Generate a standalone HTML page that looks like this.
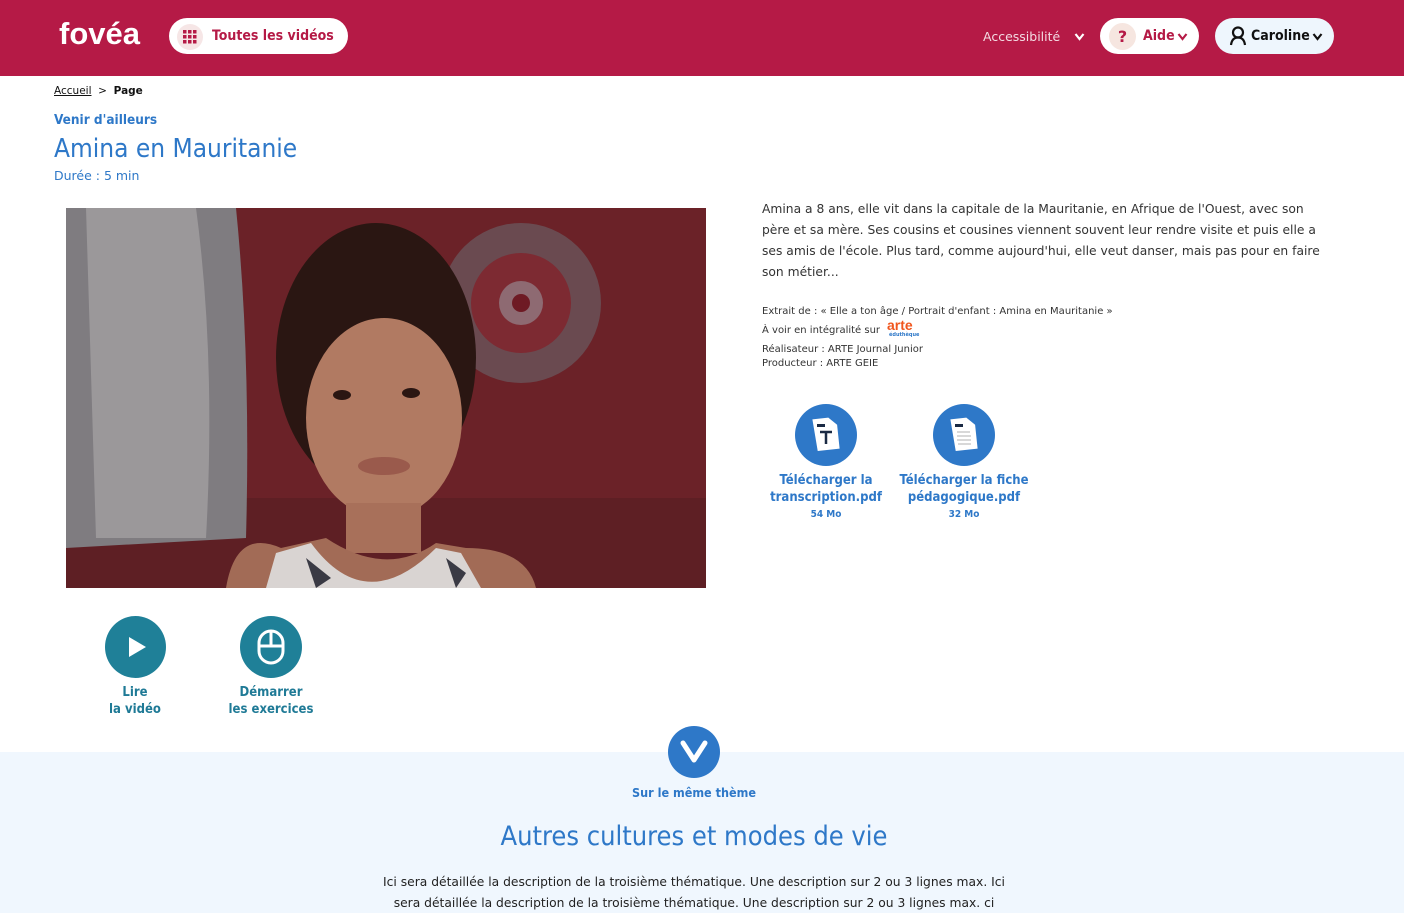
<!DOCTYPE html>
<html><head><meta charset="utf-8">
<style>
*{margin:0;padding:0;box-sizing:border-box}
body{width:1404px;height:913px;overflow:hidden;background:#fff;font-family:"DejaVu Sans","Liberation Sans",sans-serif;position:relative;color:#222}
.abs{position:absolute}
.hdr{position:absolute;left:0;top:0;width:1404px;height:76px;background:#b51a46}
.pill{position:absolute;background:#fff;border-radius:18px;height:36px;top:18px}
.blue{color:#2e78c8}
.h{font-family:"DejaVu Sans Condensed","Liberation Sans",sans-serif}
.sm{font-size:10px;color:#333;line-height:14px}
.circ{position:absolute;border-radius:50%}
.lbl{position:absolute;text-align:center;font-family:"DejaVu Sans Condensed","Liberation Sans",sans-serif;font-weight:bold;font-size:13px;line-height:17px}
</style></head><body>
<div class="hdr"></div>
<div class="abs" style="left:59px;top:16px;color:#fff;font-size:31px;font-weight:bold;font-family:'Liberation Sans',sans-serif">fovéa</div>
<div class="pill" style="left:169px;width:179px"></div>
<div class="circ" style="left:177px;top:24px;width:26px;height:26px;background:#f6e6e6"></div>
<svg class="abs" style="left:183px;top:30px" width="14" height="14"><g fill="#b51a46"><rect x="0" y="0" width="3.5" height="3.5"/><rect x="5" y="0" width="3.5" height="3.5"/><rect x="10" y="0" width="3.5" height="3.5"/><rect x="0" y="5" width="3.5" height="3.5"/><rect x="5" y="5" width="3.5" height="3.5"/><rect x="10" y="5" width="3.5" height="3.5"/><rect x="0" y="10" width="3.5" height="3.5"/><rect x="5" y="10" width="3.5" height="3.5"/><rect x="10" y="10" width="3.5" height="3.5"/></g></svg>
<div class="abs h" style="left:212px;top:28px;color:#b51a46;font-size:14px;font-weight:bold">Toutes les vidéos</div>
<div class="abs" style="left:983px;top:29px;color:#f3dbe2;font-size:12.5px">Accessibilité</div>
<svg class="abs" style="left:1074px;top:32px" width="11" height="10"><path d="M1.5 2 L5.5 7 L9.5 2" stroke="#fff" stroke-width="2.2" fill="none"/></svg>
<div class="pill" style="left:1100px;width:99px"></div>
<div class="circ" style="left:1109px;top:23px;width:27px;height:27px;background:#f6e6e0;color:#b51a46;font-weight:bold;font-size:16px;text-align:center;line-height:27px">?</div>
<div class="abs h" style="left:1143px;top:28px;color:#b51a46;font-weight:bold;font-size:14px">Aide</div>
<svg class="abs" style="left:1177px;top:32px" width="11" height="10"><path d="M1.5 2 L5.5 7 L9.5 2" stroke="#b51a46" stroke-width="2.2" fill="none"/></svg>
<div class="pill" style="left:1215px;width:119px;background:#eef6fd"></div>
<svg class="abs" style="left:1229px;top:26px" width="18" height="20"><circle cx="9" cy="6.5" r="5" stroke="#111" stroke-width="2.2" fill="none"/><path d="M2 19 Q3 11.5 9 11.5 Q15 11.5 16 19" stroke="#111" stroke-width="2.2" fill="none"/></svg>
<div class="abs h" style="left:1251px;top:28px;color:#111;font-weight:bold;font-size:14px">Caroline</div>
<svg class="abs" style="left:1312px;top:32px" width="11" height="10"><path d="M1.5 2 L5.5 7 L9.5 2" stroke="#111" stroke-width="2.2" fill="none"/></svg>

<div class="abs" style="left:54px;top:85px;font-size:10.5px;color:#111"><u>Accueil</u> &nbsp;&gt;&nbsp; <b>Page</b></div>
<div class="abs h blue" style="left:54px;top:112px;font-size:13.5px;font-weight:bold">Venir d'ailleurs</div>
<div class="abs h blue" style="left:54px;top:134px;font-size:26px">Amina en Mauritanie</div>
<div class="abs blue" style="left:54px;top:168px;font-size:12.5px">Durée : 5 min</div>

<svg class="abs" style="left:66px;top:208px" width="640" height="380">
<rect width="640" height="380" fill="#5c1c22"/>
<rect x="150" y="0" width="490" height="290" fill="#6b2228"/>
<circle cx="455" cy="95" r="80" fill="#6a4a50"/><circle cx="455" cy="95" r="50" fill="#7d2a32"/><circle cx="455" cy="95" r="22" fill="#8e6a72"/><circle cx="455" cy="95" r="9" fill="#6e1a24"/>
<rect x="0" y="290" width="640" height="90" fill="#5e1f24"/>
<path d="M0 0 H170 Q185 150 180 330 L0 340 Z" fill="#7f7c80"/>
<path d="M20 0 H130 Q150 150 140 330 L30 330 Z" fill="#9b989a"/>
<ellipse cx="310" cy="150" rx="100" ry="135" fill="#2a1612"/>
<ellipse cx="318" cy="210" rx="78" ry="100" fill="#b17a62"/>
<ellipse cx="276" cy="187" rx="9" ry="5" fill="#2a1612"/><ellipse cx="345" cy="185" rx="9" ry="5" fill="#2a1612"/>
<ellipse cx="318" cy="258" rx="26" ry="9" fill="#9a5a4c"/>
<rect x="280" y="295" width="75" height="50" fill="#a8705a"/>
<path d="M160 380 Q170 320 215 340 L260 330 Q320 370 370 335 L400 340 Q460 340 470 380 Z" fill="#a26b56"/>
<path d="M200 380 L210 345 L245 335 Q300 410 370 340 L395 345 L415 380 Z" fill="#d9d4d2"/>
<path d="M240 350 l25 20 l-15 10 Z M380 350 l20 15 l-10 15 Z" fill="#3a3a44"/>
</svg>

<div class="abs" style="left:762px;top:199px;width:570px;font-size:12.3px;line-height:21px;color:#333">Amina a 8 ans, elle vit dans la capitale de la Mauritanie, en Afrique de l'Ouest, avec son père et sa mère. Ses cousins et cousines viennent souvent leur rendre visite et puis elle a ses amis de l'école. Plus tard, comme aujourd'hui, elle veut danser, mais pas pour en faire son métier...</div>
<div class="abs sm" style="left:762px;top:305px">Extrait de : « Elle a ton âge / Portrait d'enfant : Amina en Mauritanie »</div>
<div class="abs sm" style="left:762px;top:324px">À voir en intégralité sur</div>
<div class="abs" style="left:887px;top:318px;color:#f0561e;font-weight:bold;font-size:14px;line-height:14px;font-family:'Liberation Sans',sans-serif">arte</div>
<div class="abs" style="left:889px;top:332px;color:#2e78c8;font-size:5px;font-weight:bold">éduthèque</div>
<div class="abs sm" style="left:762px;top:343px">Réalisateur : ARTE Journal Junior<br>Producteur : ARTE GEIE</div>

<div class="circ" style="left:795px;top:404px;width:62px;height:62px;background:#2e78c8"></div>
<svg class="abs" style="left:810px;top:416px" width="32" height="38"><path d="M4 2 H20 L28 10 V34 H6 Z" fill="#fff" transform="rotate(-6 16 18)"/><rect x="7" y="8" width="8" height="3" fill="#1a2a44"/><path d="M10 16 H22 M16 16 V28" stroke="#1a2a44" stroke-width="2.5"/></svg>
<div class="circ" style="left:933px;top:404px;width:62px;height:62px;background:#2e78c8"></div>
<svg class="abs" style="left:948px;top:416px" width="32" height="38"><path d="M4 2 H20 L28 10 V34 H6 Z" fill="#fff" transform="rotate(-6 16 18)"/><rect x="7" y="8" width="8" height="3" fill="#1a2a44"/><path d="M9 16 H22 M9 20 H23 M9 24 H23 M10 28 H23" stroke="#ccc" stroke-width="1.5"/></svg>
<div class="lbl blue" style="left:756px;top:472px;width:140px">Télécharger la<br>transcription.pdf</div>
<div class="lbl blue" style="left:756px;top:506px;width:140px;font-size:10px">54 Mo</div>
<div class="lbl blue" style="left:890px;top:472px;width:148px">Télécharger la fiche<br>pédagogique.pdf</div>
<div class="lbl blue" style="left:890px;top:506px;width:148px;font-size:10px">32 Mo</div>

<div class="circ" style="left:105px;top:616px;width:61px;height:62px;background:#1f8098"></div>
<svg class="abs" style="left:128px;top:636px" width="20" height="22"><path d="M1 1 L18 11 L1 21 Z" fill="#fff"/></svg>
<div class="circ" style="left:240px;top:616px;width:62px;height:62px;background:#1f8098"></div>
<svg class="abs" style="left:256px;top:629px" width="30" height="36"><rect x="3" y="2" width="24" height="32" rx="12" stroke="#fff" stroke-width="3" fill="none"/><path d="M3 17 H27 M15 2 V17" stroke="#fff" stroke-width="3"/></svg>
<div class="lbl" style="left:85px;top:684px;width:100px;color:#1f7a96">Lire<br>la vidéo</div>
<div class="lbl" style="left:211px;top:684px;width:120px;color:#1f7a96">Démarrer<br>les exercices</div>

<div class="abs" style="left:0;top:752px;width:1404px;height:161px;background:#f0f7fe"></div>
<div class="circ" style="left:668px;top:726px;width:52px;height:52px;background:#2e78c8"></div>
<svg class="abs" style="left:678px;top:738px" width="32" height="28"><path d="M5 5 L16 22 L27 5" stroke="#fff" stroke-width="5" fill="none" stroke-linecap="round" stroke-linejoin="round"/></svg>
<div class="abs h blue" style="left:0;width:1388px;top:785px;text-align:center;font-size:12.5px;font-weight:bold">Sur le même thème</div>
<div class="abs h blue" style="left:0;width:1388px;top:821px;text-align:center;font-size:27px">Autres cultures et modes de vie</div>
<div class="abs" style="left:368px;width:652px;top:872px;text-align:center;font-size:12.3px;line-height:21px;color:#222">Ici sera détaillée la description de la troisième thématique. Une description sur 2 ou 3 lignes max. Ici sera détaillée la description de la troisième thématique. Une description sur 2 ou 3 lignes max. ci</div>
</body></html>
